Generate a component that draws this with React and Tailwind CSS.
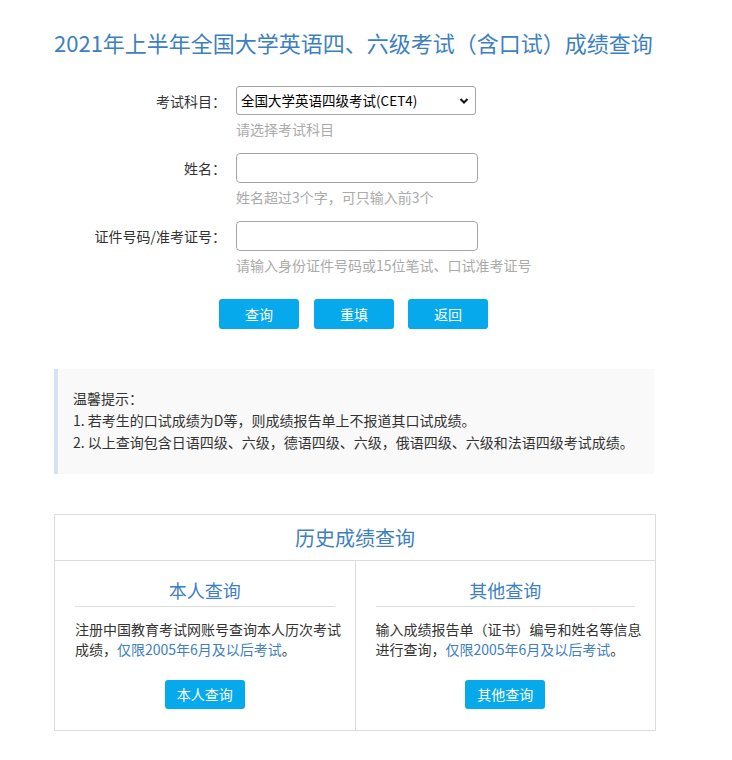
import React from "react";

const F = "font-['Microsoft_YaHei','Noto_Sans_CJK_SC',sans-serif]";

function Row({ label, children, hint }) {
  return (
    <div className="flex">
      <div className="w-[182px] shrink-0 h-[30px] flex items-center justify-end pr-[10px] text-[14px] text-[#333]">
        {label}
      </div>
      <div className="flex flex-col">
        {children}
        <div className="mt-[4px] h-[20px] leading-[20px] text-[14px] text-[#aaa]">{hint}</div>
      </div>
    </div>
  );
}

function Btn({ children, cls = "" }) {
  return (
    <button
      className={
        "w-[80px] h-[30px] rounded-[3px] bg-[#06a9ec] text-white text-[14px] leading-[30px] text-center " +
        cls
      }
    >
      {children}
    </button>
  );
}

function Col({ title, first, btn, border }) {
  return (
    <div className={"flex-1 pt-[17px] pb-[21px] pl-[20px] pr-[10px] flex flex-col " + (border ? "border-r border-[#ddd]" : "")}>
      <div className="mr-[10px] text-center text-[18px] leading-[24px] text-[#3d7fc1] pb-[4px] border-b border-[#ddd]">
        {title}
      </div>
      <p className="mt-[12px] text-[14px] leading-[20px] text-[#333]">
        {first}
        <span className="text-[#3d7fc1]">仅限2005年6月及以后考试</span>。
      </p>
      <div className="mt-[21px] flex justify-center pr-[10px]">
        <button className="w-[80px] h-[29px] rounded-[3px] bg-[#06a9ec] text-white text-[14px] leading-[29px]">
          {btn}
        </button>
      </div>
    </div>
  );
}

export default function App() {
  return (
    <div className={"min-h-[760px] bg-white " + F}>
      <div className="ml-[54px] w-[602px] pt-[27px]">
        <h1 className="text-[22px] leading-[30px] text-[#3d7fc1] font-normal">
          2021年上半年全国大学英语四、六级考试（含口试）成绩查询
        </h1>

        <div className="mt-[29px] flex flex-col gap-[14px]">
          <Row label="考试科目：" hint="请选择考试科目">
            <div className="relative w-[240px] h-[29px] border border-[#a6a6a6] rounded-[3px] flex items-center pl-[4px] text-[13.5px] text-black">
              全国大学英语四级考试(CET4)
              <svg className="absolute right-[6px] top-[10px]" width="10" height="8" viewBox="0 0 10 8">
                <path d="M1.5 2 L5 5.5 L8.5 2" fill="none" stroke="#111" strokeWidth="2" />
              </svg>
            </div>
          </Row>
          <Row label="姓名：" hint="姓名超过3个字，可只输入前3个">
            <div className="w-[242px] h-[30px] border border-[#a6a6a6] rounded-[4px]" />
          </Row>
          <Row label="证件号码/准考证号：" hint="请输入身份证件号码或15位笔试、口试准考证号">
            <div className="w-[242px] h-[30px] border border-[#a6a6a6] rounded-[4px]" />
          </Row>
        </div>

        <div className="mt-[24px] flex ml-[165px]">
          <Btn>查询</Btn>
          <Btn cls="ml-[15px]">重填</Btn>
          <Btn cls="ml-[14px]">返回</Btn>
        </div>

        <div className="mt-[40px] w-[600px] bg-[#f9f9f9] border-l-[4px] border-[#d5e3f1] pl-[15px] pt-[18px] pb-[21px] text-[14px] leading-[22px] text-[#333]">
          <p>温馨提示：</p>
          <p>1. 若考生的口试成绩为D等，则成绩报告单上不报道其口试成绩。</p>
          <p>2. 以上查询包含日语四级、六级，德语四级、六级，俄语四级、六级和法语四级考试成绩。</p>
        </div>

        <div className="mt-[40px] border border-[#ddd] mb-[30px]">
          <div className="h-[46px] flex items-center justify-center text-[20px] text-[#3d7fc1] border-b border-[#ddd]">
            历史成绩查询
          </div>
          <div className="flex">
            <Col
              border
              title="本人查询"
              first="注册中国教育考试网账号查询本人历次考试成绩，"
              btn="本人查询"
            />
            <Col
              title="其他查询"
              first="输入成绩报告单（证书）编号和姓名等信息进行查询，"
              btn="其他查询"
            />
          </div>
        </div>
      </div>
    </div>
  );
}
